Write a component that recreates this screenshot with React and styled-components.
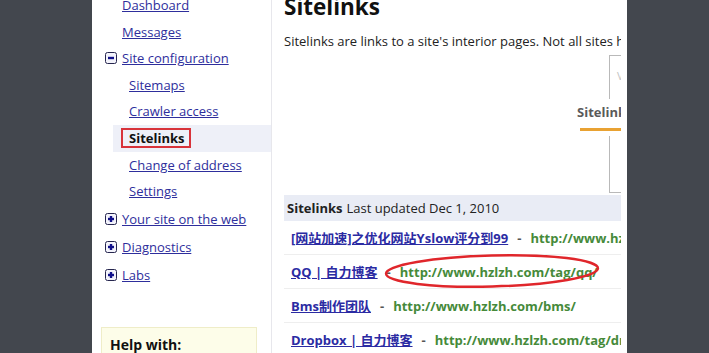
import React from "react";
import styled, { createGlobalStyle } from "styled-components";

const Global = createGlobalStyle`
  html, body { margin: 0; padding: 0; background: #43474e; overflow: hidden; }
  body { font-family: "Open Sans", "Noto Sans CJK SC", sans-serif; }
`;

const Panel = styled.div`
  margin-left: 92px;
  width: 535px;
  height: 353px;
  background: #ffffff;
  display: flex;
  overflow: hidden;
`;

const Sidebar = styled.aside`
  width: 179px;
  flex: none;
  border-right: 1px solid #e7e7ec;
  display: flex;
  flex-direction: column;
`;

const NavList = styled.ul`
  list-style: none;
  margin: -8px 0 0 0;
  padding: 0;
`;

const NavItem = styled.li`
  display: flex;
  align-items: center;
  gap: 5px;
  height: ${(p) => p.$h || 26.5}px;
  padding-left: ${(p) => p.$indent}px;
  font-size: 13px;
`;

const SelectedItem = styled.li`
  display: flex;
  align-items: center;
  height: 27px;
  margin-left: 21px;
  padding-left: 8px;
  background: #eef0f8;
`;

const NavLink = styled.a`
  color: #2e2e9c;
  text-decoration: underline;
  cursor: pointer;
`;

const CurrentLabel = styled.span`
  display: inline-flex;
  align-items: center;
  height: 16px;
  padding: 0 5px 0 6px;
  border: 2px solid #d8333a;
  font-size: 13px;
  font-weight: 700;
  color: #111;
`;

const HelpBox = styled.div`
  margin: 38px 0 0 9px;
  width: 138px;
  padding: 7px 8px 8px;
  background: #fdfde9;
  border: 1px solid #efedc8;
  font-size: 14px;
  font-weight: 700;
  color: #111;
`;

const Main = styled.main`
  width: 337px;
  padding-left: 12px;
  flex: none;
  overflow: hidden;
  display: flex;
  flex-direction: column;
`;

const Title = styled.h1`
  margin: -6px 0 0 0;
  font-size: 22.5px;
  line-height: 26px;
  font-weight: 700;
  color: #111;
  white-space: nowrap;
`;

const Intro = styled.p`
  margin: 12px 0 0 0;
  font-size: 13px;
  line-height: 18px;
  color: #222;
  white-space: nowrap;
`;

const Preview = styled.div`
  position: relative;
  margin: 5px 0 0 325px;
  width: 300px;
  height: 136px;
  border: 1px solid #b9b9b9;
  flex: none;
`;

const PreviewHint = styled.span`
  display: block;
  padding: 12px 0 0 7px;
  font-size: 11px;
  color: #c4c4c4;
`;

const PreviewTab = styled.div`
  position: absolute;
  left: -33px;
  top: 43px;
  background: #fff;
  padding: 4px 0 5px 0;
  font-size: 13px;
  font-weight: 700;
  color: #5a5a5a;
  white-space: nowrap;
  &::after {
    content: "";
    display: block;
    margin: 7px 0 0 3px;
    height: 3px;
    background: #e9a232;
  }
`;

const TableHead = styled.div`
  margin-top: 2px;
  height: 26px;
  display: flex;
  align-items: center;
  padding-left: 3px;
  background: #e9ecf5;
  font-size: 13px;
  color: #222;
  white-space: nowrap;
  flex: none;
`;

const Strong = styled.b`
  font-weight: 700;
  margin-right: 4px;
`;

const Row = styled.div`
  position: relative;
  height: 33px;
  border-bottom: 1px solid #eeeeee;
  display: flex;
  align-items: center;
  gap: 9px;
  padding-left: 7px;
  font-size: 13px;
  font-weight: 700;
  white-space: nowrap;
  flex: none;
`;

const RowLink = styled.a`
  color: #2b2ba3;
  text-decoration: underline;
`;

const Dash = styled.span`
  color: #555;
`;

const Url = styled.span`
  color: #468a3a;
`;

const Circle = styled.svg`
  position: absolute;
  left: 100px;
  top: -1px;
  overflow: visible;
`;

const BoxIcon = ({ plus }) => (
  <svg width="12" height="12" viewBox="0 0 12 12">
    <rect x="0.5" y="0.5" width="11" height="11" rx="2" fill="#f3f3fb" stroke="#26264e" />
    <path d="M3 6h6" stroke="#10108a" strokeWidth="2.4" />
    {plus && <path d="M6 3v6" stroke="#10108a" strokeWidth="2.4" />}
  </svg>
);

const rows = [
  { t: "[网站加速]之优化网站Yslow评分到99", u: "http://www.hzlzh.com/yslow/" },
  { t: "QQ | 自力博客", u: "http://www.hzlzh.com/tag/qq/", mark: true },
  { t: "Bms制作团队", u: "http://www.hzlzh.com/bms/" },
  { t: "Dropbox | 自力博客", u: "http://www.hzlzh.com/tag/dropbox/" },
];

export default function App() {
  return (
    <>
      <Global />
      <Panel>
        <Sidebar>
          <NavList>
            <NavItem $indent={30}><NavLink>Dashboard</NavLink></NavItem>
            <NavItem $indent={30}><NavLink>Messages</NavLink></NavItem>
            <NavItem $indent={13}><BoxIcon /><NavLink>Site configuration</NavLink></NavItem>
            <NavItem $indent={37}><NavLink>Sitemaps</NavLink></NavItem>
            <NavItem $indent={37}><NavLink>Crawler access</NavLink></NavItem>
            <SelectedItem><CurrentLabel>Sitelinks</CurrentLabel></SelectedItem>
            <NavItem $indent={37}><NavLink>Change of address</NavLink></NavItem>
            <NavItem $indent={37}><NavLink>Settings</NavLink></NavItem>
            <NavItem $indent={13} $h={28}><BoxIcon plus /><NavLink>Your site on the web</NavLink></NavItem>
            <NavItem $indent={13} $h={28}><BoxIcon plus /><NavLink>Diagnostics</NavLink></NavItem>
            <NavItem $indent={13} $h={28}><BoxIcon plus /><NavLink>Labs</NavLink></NavItem>
          </NavList>
          <HelpBox>Help with:</HelpBox>
        </Sidebar>
        <Main>
          <Title>Sitelinks</Title>
          <Intro>Sitelinks are links to a site's interior pages. Not all sites have sitelinks.</Intro>
          <Preview>
            <PreviewHint>Visit</PreviewHint>
            <PreviewTab>Sitelinks</PreviewTab>
          </Preview>
          <TableHead><Strong>Sitelinks</Strong>Last updated Dec 1, 2010</TableHead>
          {rows.map((r) => (
            <Row key={r.t}>
              <RowLink>{r.t}</RowLink>
              <Dash>-</Dash>
              <Url>{r.u}</Url>
              {r.mark && (
                <Circle width="218" height="34" viewBox="0 0 218 34">
                  <ellipse cx="108" cy="17" rx="106" ry="15.5" fill="none" stroke="#e0262b" strokeWidth="2.5" transform="rotate(-1.5 108 17)" />
                </Circle>
              )}
            </Row>
          ))}
        </Main>
      </Panel>
    </>
  );
}
